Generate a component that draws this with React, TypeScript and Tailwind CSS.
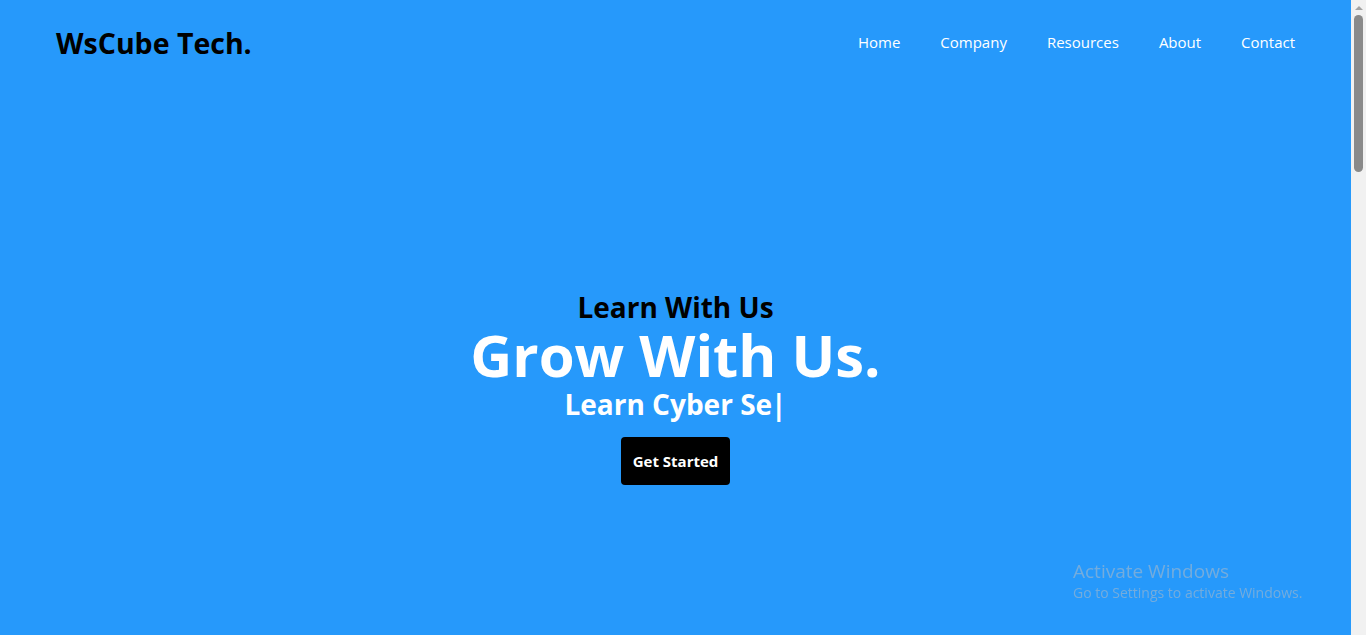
const navLinks = ["Home", "Company", "Resources", "About", "Contact"];

const Header = () => {
    return (
        <header className="flex items-center justify-between pl-[56px] pr-[56px] h-[86px]">
            <h1 className="text-[28.5px] font-bold text-black">WsCube Tech.</h1>
            <nav className="-mt-[2px]">
                <ul className="flex items-center gap-[40px]">
                    {navLinks.map((link) => (
                        <li key={link}>
                            <a href="#" className="text-white text-[15px]">
                                {link}
                            </a>
                        </li>
                    ))}
                </ul>
            </nav>
        </header>
    );
};

const Hero = () => {
    return (
        <section className="flex flex-col items-center pt-[203px] pb-[150px]">
            <h3 className="text-[28px] font-bold text-black leading-[36px]">Learn With Us</h3>
            <h2 className="text-[58px] font-bold text-white leading-[60px]">Grow With Us.</h2>
            <p className="text-[28px] font-bold text-white leading-[38px]">
                Learn Cyber Se<span className="ml-[-1px]">|</span>
            </p>
            <button className="mt-[14px] bg-black text-white text-[15px] font-bold px-[12px] h-[48px] rounded-[4px]">
                Get Started
            </button>
        </section>
    );
};

// fake browser scrollbar seen in the screenshot
const Scrollbar = () => {
    return (
        <div className="fixed top-0 right-0 h-screen w-[15px] bg-[#f1f1f1] flex flex-col items-center">
            <div className="h-[15px] flex items-center justify-center">
                <div className="w-0 h-0 border-l-[4px] border-r-[4px] border-b-[4px] border-l-transparent border-r-transparent border-b-[#a3a3a3]" />
            </div>
            <div className="w-[9px] h-[157px] rounded-full bg-[#8a8a8a]" />
        </div>
    );
};

export default function App() {
    return (
        <div className="min-h-[2480px] bg-[#2699fb] font-['Open_Sans','Noto_Sans',sans-serif]">
            <div className="mr-[15px]">
                <Header />
                <Hero />
            </div>
            <Scrollbar />
            {/* windows watermark */}
            <div className="fixed left-[1073px] top-[559px] text-[#74acdd] pointer-events-none">
                <p className="text-[19px] leading-[24px]">Activate Windows</p>
                <p className="text-[14px] leading-[20px]">Go to Settings to activate Windows.</p>
            </div>
        </div>
    );
}
